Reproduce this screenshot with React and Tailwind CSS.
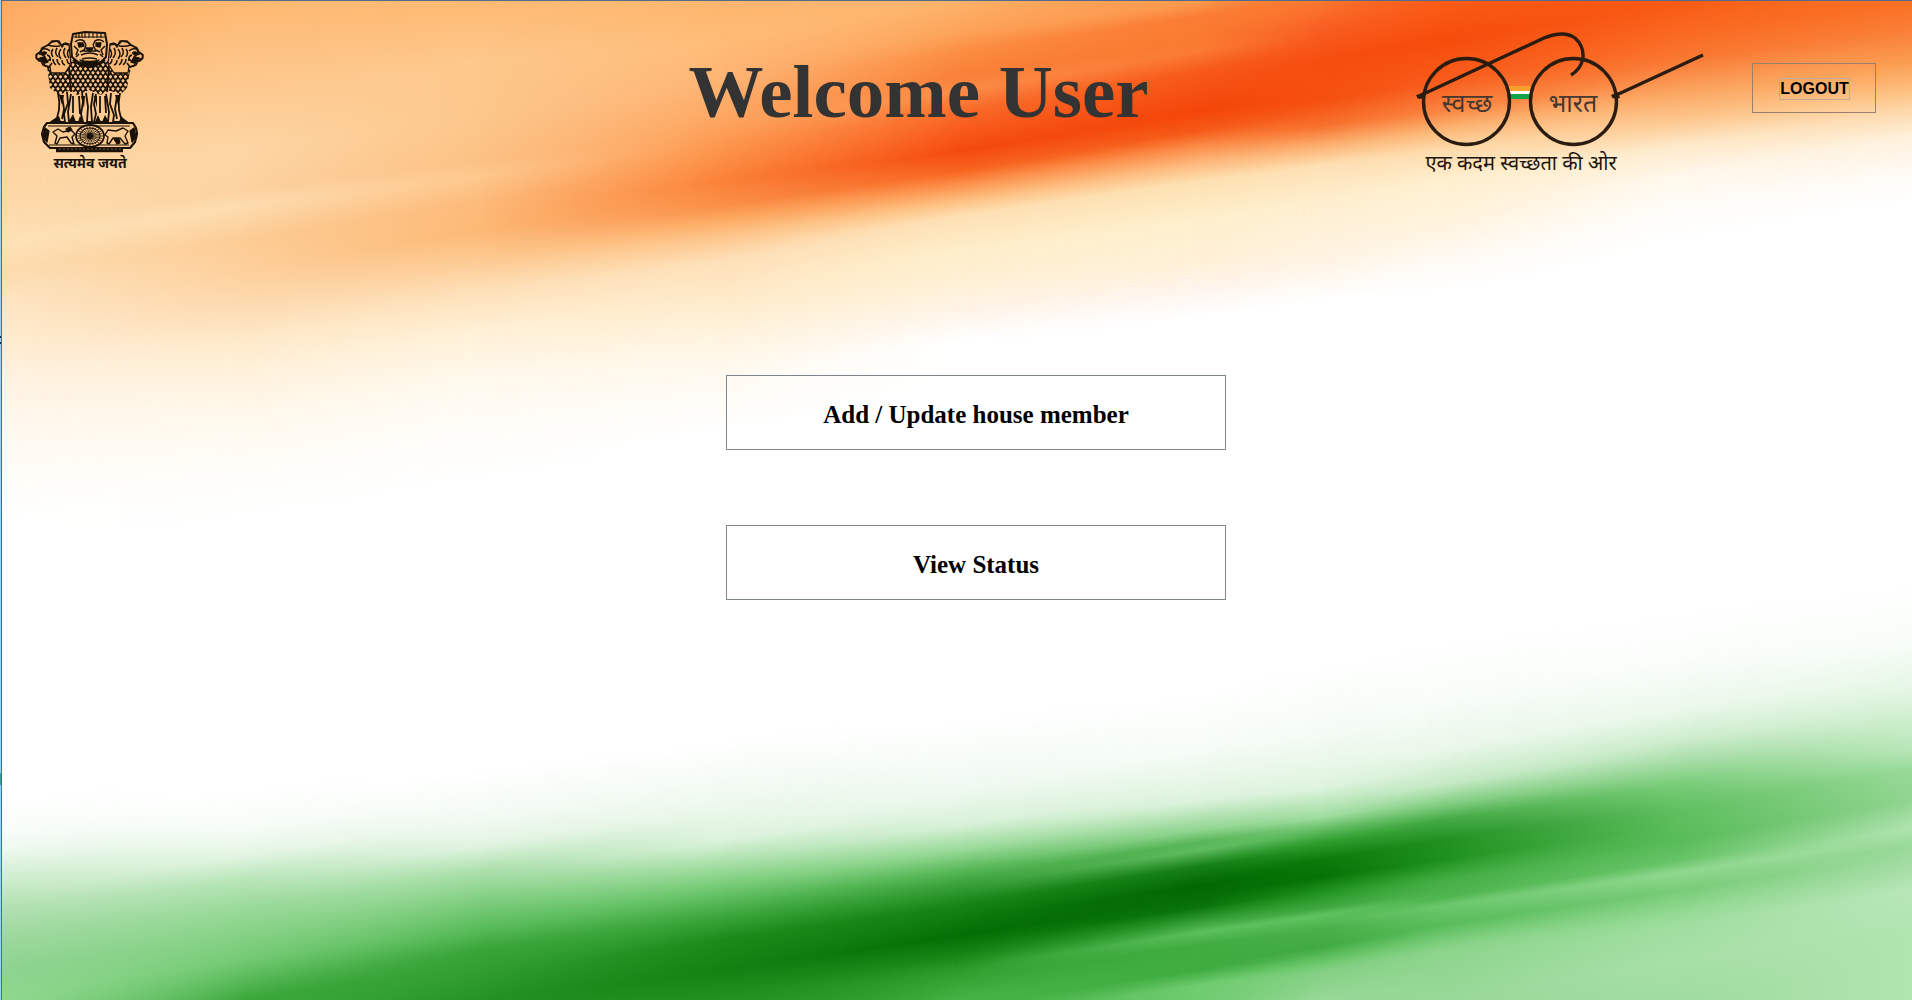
import React from "react";

const FIELD_WIDTH = 1912;
const SLOPE = 0.15;

/* Colour stops down each column of the flag painting: [y, colour]. */
const COLUMNS = [
  { x: 0, stops: [[0, "#ffab63"], [40, "#fdb06a"], [100, "#fcc588"], [150, "#fdd3a0"], [200, "#fdd8a8"], [243, "#fee2b8"], [270, "#fddcb0"], [300, "#fde5c2"], [340, "#feecd0"], [380, "#fff3e2"], [430, "#fff9f0"], [480, "#fffdf9"], [520, "#ffffff"], [800, "#ffffff"], [830, "#f8fdf8"], [850, "#eef9ef"], [880, "#cdedcd"], [910, "#b0e0b0"], [940, "#9cd89c"], [970, "#8ed490"], [1000, "#90d890"]] },
  { x: 240, stops: [[0, "#ffb870"], [40, "#fdc080"], [100, "#fdcc94"], [150, "#fdd6a4"], [190, "#fcd2a0"], [205, "#fddcb0"], [240, "#fccc94"], [270, "#fdd09c"], [300, "#fdd9ae"], [340, "#feeacb"], [380, "#fff3e0"], [430, "#fffaf0"], [480, "#fffefb"], [520, "#ffffff"], [790, "#ffffff"], [830, "#f6fcf6"], [855, "#e4f5e4"], [880, "#b8e5b8"], [910, "#98d998"], [940, "#82d082"], [960, "#74ca74"], [985, "#52b652"], [1000, "#3ba83b"]] },
  { x: 480, stops: [[0, "#ffb972"], [60, "#fdc88c"], [120, "#fcc68a"], [160, "#fcc184"], [175, "#fdc88e"], [200, "#fdba7a"], [230, "#fcb874"], [260, "#fdcb94"], [290, "#fee0b8"], [330, "#fff0d6"], [380, "#fff9ee"], [430, "#fffdf9"], [480, "#ffffff"], [770, "#ffffff"], [820, "#f2faf2"], [845, "#e2f4e2"], [870, "#aee0ae"], [900, "#80ce80"], [930, "#56ba57"], [950, "#38a438"], [970, "#329e32"], [1000, "#249224"]] },
  { x: 720, stops: [[0, "#fdb56c"], [40, "#ffbc78"], [80, "#fdb474"], [120, "#fda560"], [150, "#fc944a"], [180, "#fb8238"], [205, "#fa9048"], [220, "#fdac64"], [235, "#fdc48a"], [260, "#fee0b8"], [300, "#feebca"], [340, "#fff5e2"], [380, "#fffaf2"], [430, "#ffffff"], [740, "#ffffff"], [800, "#eff9ef"], [840, "#ddf3dd"], [860, "#b0e2b0"], [885, "#78cc78"], [905, "#50b450"], [920, "#36a236"], [940, "#1a8a1a"], [970, "#138213"], [1000, "#229222"]] },
  { x: 960, stops: [[0, "#fdb269"], [30, "#fda45a"], [50, "#fb8e42"], [75, "#f98038"], [90, "#fc8c48"], [110, "#fa6c2a"], [130, "#f85a1c"], [150, "#f44a0e"], [170, "#f86520"], [185, "#fc9450"], [200, "#fdc080"], [215, "#fee0b4"], [250, "#feeecb"], [280, "#fff0d4"], [310, "#fff4e8"], [340, "#ffffff"], [720, "#ffffff"], [790, "#eff9f0"], [825, "#d8f1d8"], [850, "#98d998"], [870, "#58b858"], [885, "#38a038"], [905, "#168416"], [935, "#046e04"], [955, "#168616"], [970, "#2c9c2c"], [1000, "#46b446"]] },
  { x: 1200, stops: [[0, "#fc9a50"], [15, "#fb7c34"], [40, "#f97a30"], [50, "#fb7a34"], [70, "#f65a1a"], [110, "#f4460a"], [130, "#f65a18"], [145, "#fb8c48"], [160, "#fdb478"], [180, "#fee0b0"], [220, "#fef0ce"], [260, "#fff0d6"], [290, "#fff5ee"], [315, "#ffffff"], [690, "#ffffff"], [750, "#f6fcf6"], [800, "#def3de"], [830, "#90d490"], [842, "#58b658"], [850, "#60bc60"], [866, "#168016"], [885, "#006800"], [907, "#0a740a"], [922, "#38a238"], [932, "#5cc05c"], [945, "#40ac40"], [970, "#40ac40"], [985, "#70cc70"], [1000, "#70cc70"]] },
  { x: 1320, stops: [[0, "#fb7830"], [25, "#f86024"], [60, "#f64e10"], [100, "#f5500f"], [125, "#f8702c"], [145, "#fcb070"], [165, "#fee0b4"], [200, "#feeece"], [260, "#fff4e4"], [300, "#ffffff"], [665, "#ffffff"], [735, "#f4fbf4"], [787, "#dff4df"], [817, "#a0dca0"], [830, "#60bc60"], [843, "#2c9c2c"], [860, "#0a7a0a"], [877, "#067206"], [893, "#209420"], [908, "#40a840"], [915, "#60c460"], [930, "#48b048"], [947, "#40aa40"], [963, "#6cc86c"], [972, "#84d084"], [1000, "#98d898"]] },
  { x: 1440, stops: [[0, "#fb5c18"], [40, "#f64c0c"], [80, "#f85c1c"], [110, "#fa8440"], [130, "#fcb878"], [150, "#fedcae"], [180, "#fff0d0"], [220, "#fff3dc"], [260, "#fffaf4"], [290, "#ffffff"], [640, "#ffffff"], [700, "#f8fdf8"], [750, "#eaf7ea"], [785, "#c4e9c4"], [805, "#80cc80"], [820, "#44aa44"], [840, "#209020"], [860, "#1c901c"], [880, "#44ae44"], [898, "#50b650"], [906, "#6cc86c"], [925, "#58bc58"], [940, "#78cc78"], [950, "#8cd48c"], [1000, "#98d898"]] },
  { x: 1680, stops: [[0, "#f85a16"], [30, "#fa6820"], [60, "#f97a34"], [90, "#fba460"], [120, "#fdc890"], [145, "#feeacc"], [175, "#fff8ec"], [210, "#fffdfa"], [240, "#ffffff"], [610, "#ffffff"], [660, "#fafdfa"], [710, "#ebf8eb"], [740, "#cdedcd"], [762, "#a6dca6"], [785, "#78cc78"], [810, "#60c060"], [840, "#58bc58"], [860, "#68c468"], [872, "#90d890"], [890, "#78cc78"], [910, "#90d890"], [925, "#a0dea0"], [960, "#a8e0a8"], [1000, "#a0dca0"]] },
  { x: 1912, stops: [[0, "#fa7024"], [30, "#f98038"], [60, "#fb9c50"], [90, "#fdc080"], [110, "#fdd8ac"], [135, "#fff0da"], [170, "#fffaf4"], [200, "#ffffff"], [580, "#ffffff"], [640, "#f8fdf8"], [690, "#e4f6e4"], [725, "#caedca"], [750, "#b8e6b8"], [770, "#98d998"], [800, "#90d490"], [820, "#a8dfa8"], [828, "#b0e4b0"], [845, "#98d898"], [870, "#a8dea8"], [890, "#b8e6b8"], [930, "#b0e4b0"], [1000, "#b0e4b0"]] },
];

/* Each column fades into the next one along the slanted brush direction. */
function FlagBackdrop() {
  const span = 1300;
  return (
    <svg
      className="absolute inset-0 h-full w-full"
      viewBox="0 0 1912 1000"
      preserveAspectRatio="none"
      aria-hidden="true"
    >
      <defs>
        {COLUMNS.map((col, i) => (
          <React.Fragment key={col.x}>
            <linearGradient id={`col${i}`} gradientUnits="userSpaceOnUse" x1="0" x2="0" y1="0" y2={span}>
              {col.stops.map(([y, color]) => (
                <stop key={y} offset={(y + col.x * SLOPE) / span} stopColor={color} />
              ))}
            </linearGradient>
            {i > 0 && (
              <>
                <linearGradient id={`fade${i}`} gradientUnits="userSpaceOnUse" x1={COLUMNS[i - 1].x} x2={col.x} y1="0" y2="0">
                  <stop offset="0" stopColor="#fff" stopOpacity="0" />
                  <stop offset="1" stopColor="#fff" stopOpacity="1" />
                </linearGradient>
                <mask id={`mask${i}`} maskUnits="userSpaceOnUse" x="0" y="0" width={FIELD_WIDTH} height={span}>
                  <rect x="0" y="0" width={FIELD_WIDTH} height={span} fill={`url(#fade${i})`} />
                </mask>
              </>
            )}
          </React.Fragment>
        ))}
      </defs>
      <g transform={`matrix(1 ${-SLOPE} 0 1 0 0)`}>
        {COLUMNS.map((col, i) => (
          <rect
            key={col.x}
            x="0"
            y="0"
            width={FIELD_WIDTH}
            height={span}
            fill={`url(#col${i})`}
            mask={i > 0 ? `url(#mask${i})` : undefined}
          />
        ))}
      </g>
    </svg>
  );
}

function scallops() {
  let d = "";
  for (let row = 0; row < 9; row++) {
    const y = 29 + row * 4;
    for (let k = 0; k < 18; k++) {
      const x = 8 + k * 5 + (row % 2 ? 2.5 : 0);
      d += `M${x} ${y}q0 4 2.5 4.5q2.5 -.5 2.5 -4.5`;
    }
  }
  return d;
}

const SPOKES = Array.from({ length: 24 }, (_, i) => (i * Math.PI) / 12);

function SideHead() {
  return (
    <g>
      <path d="M34 14 30 13 26 15 22 11 17 12 13 15 8 18 6 22 2 24 1 28 4 31 8 31 10 36 15 37 16 43 30 43 36 34Z" fill="#fbb975" />
      <path d="M34 15 29 14 27 17 24 11 17 11 13 15 7 18 5 22 1 25 2 29 6 31 8 35 14 37 17 33" strokeWidth="1.6" />
      <path d="M13 15q5 2 12 1M7 19q5-1 8 2M4 24q4 0 6 3M3 29l7-1M8 22l4 1M10 33l5-4M12 25q4 1 3 6M18 19q-3 4 0 8M22 18q-3 5 1 9M26 19q-4 5 0 10M30 18q-3 5 1 10M34 19q-3 5 0 9M18 29q0 4 3 6M22 29q0 4 3 6M27 30q0 4 3 5M32 29q0 4 3 5" strokeWidth="1.5" />
      <path d="M6 23l4-1 1 2-3 1ZM5 28l5-1 3 5-4 1Z" fill="#1a1208" />
    </g>
  );
}

function Emblem() {
  return (
    <svg className="h-[148px] w-[110px] shrink-0" viewBox="0 0 110 148" role="img" aria-label="State Emblem of India">
      <defs>
        <clipPath id="maneClip">
          <path d="M12 36 24 28 38 32 70 32 84 28 97 35 94 46 92 58 86 64 72 60 66 65 54 60 42 65 36 60 24 65 15 58Z" />
        </clipPath>
      </defs>
      <g fill="none" stroke="#1a1208" strokeWidth="1.3" strokeLinejoin="round">
        <path d="M12 36 24 28 38 32 70 32 84 28 97 35 94 46 92 58 86 64 72 60 66 65 54 60 42 65 36 60 24 65 15 58Z" fill="#fcc488" stroke="none" />
        <path d={scallops()} clipPath="url(#maneClip)" strokeWidth="1.7" />
        <path d="M34 36 36 62M74 36 72 62" strokeWidth="1.8" />
        <SideHead />
        <g transform="matrix(-1 0 0 1 109 0)">
          <SideHead />
        </g>

        {/* front lion */}
        <path d="M38 4 50 2 70 3 72 14 71 27 66 32 54 35 43 32 37 27 36 14Z" fill="#fbbd7c" strokeWidth="2" />
        <path d="M39 7h31M41 4v4M44 3v5M47 3v5M50 3v5M54 3v5M58 3v5M62 3v5M66 3v5" strokeWidth="1.1" />
        <path d="M40 12q4-4 9-1l2 4M69 12q-4-4-9-1l-2 4M51 15l-2 6h12l-3-6M39 16l4 4-2 5M70 16l-4 4 2 5M45 22l4-2M65 22l-4-2M41 27l3-3M68 27l-3-3M46 25q9-4 17 0M47 29q7-2 15 0" strokeWidth="1.5" />
        <path d="M43 13l5 0 1 3-5 1ZM61 13l5 0-1 4-4-1ZM51 18h7l-2 3h-3ZM45 30q10 3 19 0l-4 3q-6 2-11 0Z" fill="#1a1208" />
        <path d="M38 30l6 4 10 3 10-3 6-4" strokeWidth="2.4" />

        {/* legs */}
        <path d="M23 63q2 9 1 17l-2 8-6 4h14l-1-8 4-11-1-11M36 64l-3 18 1 10h14l-2-8 2-12-1-10M38 66l0 17M44 66l1 18M51 63l2 14-1 15h5l-1-15 2-14M61 64l-2 10 2 10-2 8h14l1-10-3-18M65 66v17M70 66l1 17M76 63l-1 11 4 11-1 7h14l-6-4-2-8q-1-8 1-17M27 66l2 13-2 10M82 66l-2 13 2 10" strokeWidth="1.8" />
        <path d="M18 91l6-5 2 6ZM34 91l4-7 3 8ZM43 92l2-6 4 6ZM60 92l3-7 3 7ZM67 92l3-7 4 7ZM84 92l2-6 6 6ZM24 65l5 0-2 10ZM46 66l4 0-1 12ZM59 66l3 0 0 12ZM80 65l5 0-2 10Z" fill="#1a1208" stroke="none" />

        {/* abacus */}
        <path d="M12 93h86l3 5 1 6-2 8-5 6H15l-6-6-2-8 2-7Z" fill="#fccb91" strokeWidth="2.2" />
        <path d="M13 96h82M14 115h80" strokeWidth="1.2" />
        <ellipse cx="55" cy="106" rx="14" ry="11" fill="#fccb91" strokeWidth="1.8" />
        <ellipse cx="55" cy="106" rx="10" ry="8" strokeWidth="1.1" />
        <circle cx="55" cy="106" r="2.5" fill="#1a1208" />
        {SPOKES.map((a) => (
          <line key={a} x1={55 + 3 * Math.cos(a)} y1={106 + 3 * Math.sin(a)} x2={55 + 13 * Math.cos(a)} y2={106 + 10 * Math.sin(a)} strokeWidth=".8" />
        ))}
        <path d="M18 102l5-3 5 3 8-2 4 4-3 3 2 7-3-1-4-6-7 1-3 6-2-1 2-7ZM70 105l3-5 8 1 7-3 5 3-3 5 3 7-3 1-5-6-7 0-4 6-2-1 1-6Z" strokeWidth="1.4" />
        <path d="M10 98l4 3-2 11-4-5ZM99 98l-4 3 2 11 4-5ZM31 99l4-2 2 3-4 2ZM79 109l5 0 1 4-3 1Z" fill="#1a1208" />
        <path d="M21 120h67" strokeWidth="4.5" />
        <path d="M24 119h62" stroke="#8a683f" strokeWidth=".8" strokeDasharray="2 2" />
      </g>
      <text x="55" y="138" textAnchor="middle" fontSize="14" fontWeight="700" fill="#1a1208" fontFamily="'Noto Sans Devanagari','Lohit Devanagari','Noto Sans',sans-serif">
        सत्यमेव जयते
      </text>
    </svg>
  );
}

function SwachhBharatLogo() {
  return (
    <svg
      className="h-[156px] w-[288px] shrink-0"
      viewBox="0 0 288 156"
      role="img"
      aria-label="Swachh Bharat"
      fontFamily="'Noto Sans Devanagari','Lohit Devanagari','Noto Sans',sans-serif"
    >
      <rect x="93" y="56" width="21" height="5" fill="#f7a12d" />
      <rect x="93" y="61" width="21" height="3" fill="#ffffff" />
      <rect x="93" y="64" width="21" height="5" fill="#12a24b" />
      <g fill="none" stroke="#2b1c12" strokeWidth="3.4">
        <circle cx="50.5" cy="71.5" r="43" />
        <circle cx="157.5" cy="71.5" r="43" />
        <path d="M1 67 72 34 128 8Q148 0 159 8Q168 16 167 28Q165 39 155 45" />
        <path d="M196 67 287 25" />
      </g>
      <path d="M0 65l7-1 2 4-6 1ZM195 65l7-3 2 6-5 1Z" fill="#2b1c12" />
      <text x="51" y="82" textAnchor="middle" fontSize="25" fill="#46382e">स्वच्छ</text>
      <text x="157" y="82" textAnchor="middle" fontSize="25" fill="#46382e">भारत</text>
      <text x="105" y="140" textAnchor="middle" fontSize="20" fill="#1d1510">एक कदम स्वच्छता की ओर</text>
    </svg>
  );
}

function MenuButton({ children }) {
  return (
    <button
      type="button"
      className="h-[75px] w-full border border-[#7d868a] pt-1 font-['Liberation_Serif',serif] text-[25px] leading-8 font-bold text-black"
    >
      {children}
    </button>
  );
}

export default function App() {
  return (
    <div className="flex min-h-screen bg-white">
      <div className="w-px shrink-0 bg-[linear-gradient(#9bd0f5_336px,#0b2a55_336px,#0b2a55_338px,#9bd0f5_338px,#9bd0f5_342px,#0b2a55_342px,#0b2a55_344px,#9bd0f5_344px,#9bd0f5_773px,#3f9aa8_773px,#3f9aa8_785px,#9bd0f5_785px)]" />
      <div className="relative flex-1 overflow-hidden border-t border-l border-t-[#4f6c8c] border-l-[#2f74ad]">
        <FlagBackdrop />
        <div className="relative">
          <header className="flex h-[174px] items-start pt-[29px] pr-9 pl-[33px]">
            <Emblem />
            <h1 className="flex-1 pt-5 pl-[276px] text-center font-['Liberation_Serif',serif] text-[75px] leading-[84px] font-bold whitespace-nowrap text-[#333333]">
              Welcome User
            </h1>
            <SwachhBharatLogo />
            <button
              type="button"
              className="mt-[33px] ml-12 flex h-[50px] w-[124px] shrink-0 items-center justify-center border border-[#97806f] pt-px pl-px font-['Liberation_Sans',sans-serif] text-base leading-5 font-bold text-black"
            >
              <span className="border border-[#c3aa96]">LOGOUT</span>
            </button>
          </header>
          <main className="mx-auto mt-[200px] w-[538px] max-w-full pl-[38px]">
            <nav className="flex flex-col gap-[75px]" aria-label="Member actions">
              <MenuButton>Add / Update house member</MenuButton>
              <MenuButton>View Status</MenuButton>
            </nav>
          </main>
        </div>
      </div>
    </div>
  );
}
